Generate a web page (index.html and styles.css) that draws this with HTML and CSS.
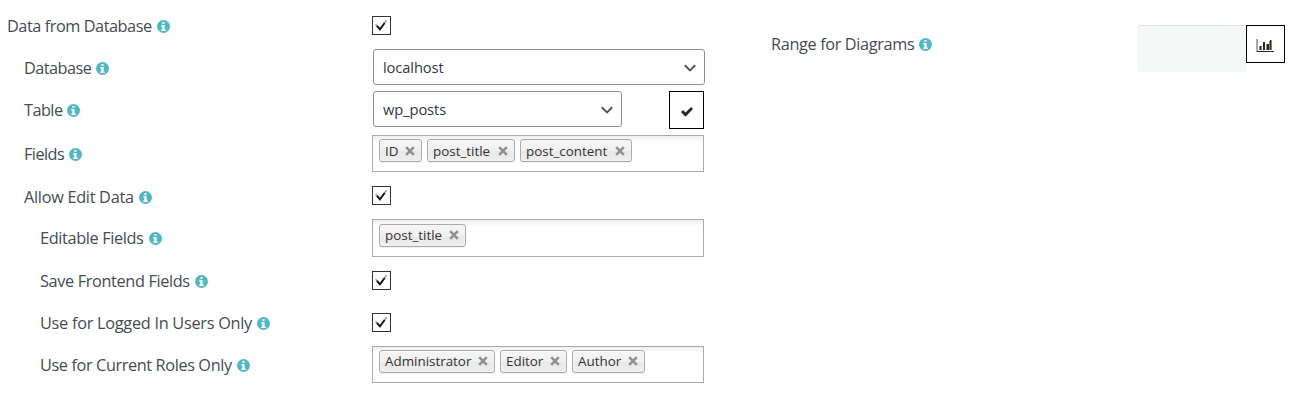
FILE: index.html
```
<!DOCTYPE html>
<html lang="en">
<head>
<meta charset="utf-8">
<title>Data source settings</title>
<link rel="stylesheet" href="styles.css">
</head>
<body>
<svg class="defs" width="0" height="0">
  <symbol id="info" viewBox="0 0 13 13"><circle cx="6.5" cy="6.5" r="6.5" fill="#50b8c4"/><path d="M5.3 2h2.3v1.8H5.3zM4.3 5h3.3v4.4h1.1v1.5H4.3V9.4h1V6.5h-1z" fill="#fff"/></symbol>
  <symbol id="tick" viewBox="0 0 19 19"><path d="M3.6 8.2l4.2 5.3L14.6 4.2" fill="none" stroke="#999" stroke-width="1.5"/><path d="M5 9.8l3 3.6L12.6 7" fill="none" stroke="#111" stroke-width="1.8"/></symbol>
  <symbol id="cross" viewBox="0 0 10 10"><path d="M1.2 1.2l7.6 7.6M8.8 1.2L1.2 8.8" fill="none" stroke="#909090" stroke-width="2.6"/></symbol>
  <symbol id="chevron" viewBox="0 0 12 8"><path d="M.8 1.2L6 6.4l5.2-5.2" fill="none" stroke="#555" stroke-width="2"/></symbol>
</svg>
<main class="settings">
  <section class="source">
    <div class="row first"><div class="label l0"><span class="t1">Data from Database</span><svg class="info"><use href="#info"/></svg></div><span class="check"><svg><use href="#tick"/></svg></span></div>
    <div class="row database"><div class="label l1"><span class="t2">Database</span><svg class="info"><use href="#info"/></svg></div><div class="select wide"><span>localhost</span><svg><use href="#chevron"/></svg></div></div>
    <div class="row table"><div class="label l1"><span class="t2">Table</span><svg class="info"><use href="#info"/></svg></div><div class="select"><span>wp_posts</span><svg><use href="#chevron"/></svg></div><div class="button apply"><svg width="14" height="12" viewBox="0 0 14 12"><path d="M1 6l2-2 2.5 2.5L11 1l2 2-7.5 7.7z" fill="#23282d"/></svg></div></div>
    <div class="row fields"><div class="label l1"><span class="t2">Fields</span><svg class="info"><use href="#info"/></svg></div><div class="chosen"><span class="tag w43"><span>ID</span><svg><use href="#cross"/></svg></span><span class="tag w88"><span>post_title</span><svg><use href="#cross"/></svg></span><span class="tag w112"><span>post_content</span><svg><use href="#cross"/></svg></span></div></div>
    <div class="row edit"><div class="label l1"><span class="t5">Allow Edit Data</span><svg class="info"><use href="#info"/></svg></div><span class="check"><svg><use href="#tick"/></svg></span></div>
    <div class="row editable"><div class="label l2"><span>Editable Fields</span><svg class="info"><use href="#info"/></svg></div><div class="chosen"><span class="tag w87"><span>post_title</span><svg><use href="#cross"/></svg></span></div></div>
    <div class="row save"><div class="label l2"><span>Save Frontend Fields</span><svg class="info"><use href="#info"/></svg></div><span class="check"><svg><use href="#tick"/></svg></span></div>
    <div class="row logged"><div class="label l2"><span class="t8">Use for Logged In Users Only</span><svg class="info"><use href="#info"/></svg></div><span class="check"><svg><use href="#tick"/></svg></span></div>
    <div class="row roles"><div class="label l2"><span class="t9">Use for Current Roles Only</span><svg class="info"><use href="#info"/></svg></div><div class="chosen"><span class="tag w116"><span>Administrator</span><svg><use href="#cross"/></svg></span><span class="tag w67"><span>Editor</span><svg><use href="#cross"/></svg></span><span class="tag w73"><span>Author</span><svg><use href="#cross"/></svg></span></div></div>
  </section>
  <section class="diagrams">
    <div class="label range"><span>Range for Diagrams</span><svg class="info"><use href="#info"/></svg></div>
    <div class="range-input"></div>
    <div class="button chart"><svg width="18" height="13" viewBox="0 0 18 13"><path d="M0 0h1v13H0z" fill="#e0a050"/><path d="M1 0h1v12H1z" fill="#79a9d8"/><path d="M1 12h17v1H1zM4 7h2v4H4zM7 3h2v8H7zM10 5h3v6h-3zM14 1h2v10h-2z" fill="#23282d"/><path d="M3 7h1v4H3zM10 5h1v6h-1zM13 2h1v9h-1z" fill="#b97a45"/><path d="M15 1h1v10h-1zM5 7h1v4H5z" fill="#5b8fc4"/></svg></div>
  </section>
</main>
</body>
</html>
```
FILE: styles.css
```
* { box-sizing: border-box; }
body { margin: 0; background: #fff; color: #444b53; font-family: "Open Sans", "Noto Sans", sans-serif; }
.defs { display: block; }
.settings { display: flex; height: 406px; padding-top: 5px; }
.source { width: 770px; flex: none; }
.row { display: flex; align-items: flex-start; height: 42px; }
.label { display: flex; align-items: center; width: 372px; height: 42px; flex: none; font-size: 16.3px; line-height: 22px; white-space: nowrap; }
.label > span { flex: none; letter-spacing: -.36px; }
.label > .t1 { letter-spacing: -.45px; }
.label > .t2 { letter-spacing: -.55px; }
.label > .t5 { letter-spacing: -.29px; }
.label > .t8 { letter-spacing: -.27px; }
.label > .t9 { letter-spacing: -.39px; }
.l0 { padding-left: 7px; }
.l1 { padding-left: 24px; }
.l2 { padding-left: 40px; }
.info { width: 13px; height: 13px; margin: 1px 0 0 5px; flex: none; }
.check { display: block; width: 19px; height: 19px; margin-top: 11px; border: 1px solid #333; }
.check svg { display: block; width: 19px; height: 19px; margin: -1px; }
.select { display: flex; align-items: center; justify-content: space-between; width: 249px; height: 36px; margin: 2px 0 0 1px; padding: 0 8px 0 9px; border: 1px solid #8c8f94; border-radius: 3px; color: #32393f; font-size: 14.7px; letter-spacing: -.1px; }
.select.wide { width: 332px; }
.select svg { width: 12px; height: 8px; margin-top: 1px; }
.button { display: flex; align-items: center; justify-content: center; border: 1px solid #000; background: #fff; }
.apply { width: 35px; height: 38px; margin: 2px 0 0 47px; padding-top: 3px; }
.chosen { display: flex; align-items: flex-start; width: 332px; height: 37px; margin-top: 2px; padding: 3px 6px; border: 1px solid #aaa; background: linear-gradient(#eee 0, #fff 6px); }
.tag { display: flex; align-items: center; justify-content: space-between; height: 23px; margin-right: 5px; padding: 0 6px 0 5px; border: 1px solid #aaa; border-radius: 3px; background: linear-gradient(#f4f4f4 20%, #f0f0f0 50%, #e8e8e8 52%, #eee); box-shadow: 0 0 2px #fff inset, 0 1px 0 rgba(0, 0, 0, .05); color: #333; font-size: 13.4px; line-height: 20px; white-space: nowrap; }
.tag svg { width: 10px; height: 10px; flex: none; }
.w43 { width: 43px; }
.w67 { width: 67px; }
.w73 { width: 73px; }
.w87 { width: 87px; }
.w88 { width: 88px; }
.w112 { width: 112px; }
.w116 { width: 116px; }
.fields { height: 45px; }
.fields .label { height: 46px; }
.fields .chosen { margin-top: 4px; }
.edit .check { margin-top: 10px; }
.editable { height: 41px; }
.editable .label { height: 40px; }
.editable .chosen { height: 38px; margin-top: 1px; padding-top: 4px; }
.editable .tag, .roles .tag { padding-bottom: 2px; }
.save { height: 43px; }
.save .label { height: 44px; }
.save .check { margin-top: 12px; }
.diagrams { display: flex; align-items: flex-start; padding-top: 20px; }
.range { width: 367px; height: 38px; padding-left: 1px; }
.range-input { width: 110px; height: 47px; border-top: 1px solid #e0e2e2; border-radius: 4px; background: #f6f8f8; }
.chart { width: 39px; height: 38px; margin-left: -1px; padding: 3px 2px 0 0; position: relative; }
```
